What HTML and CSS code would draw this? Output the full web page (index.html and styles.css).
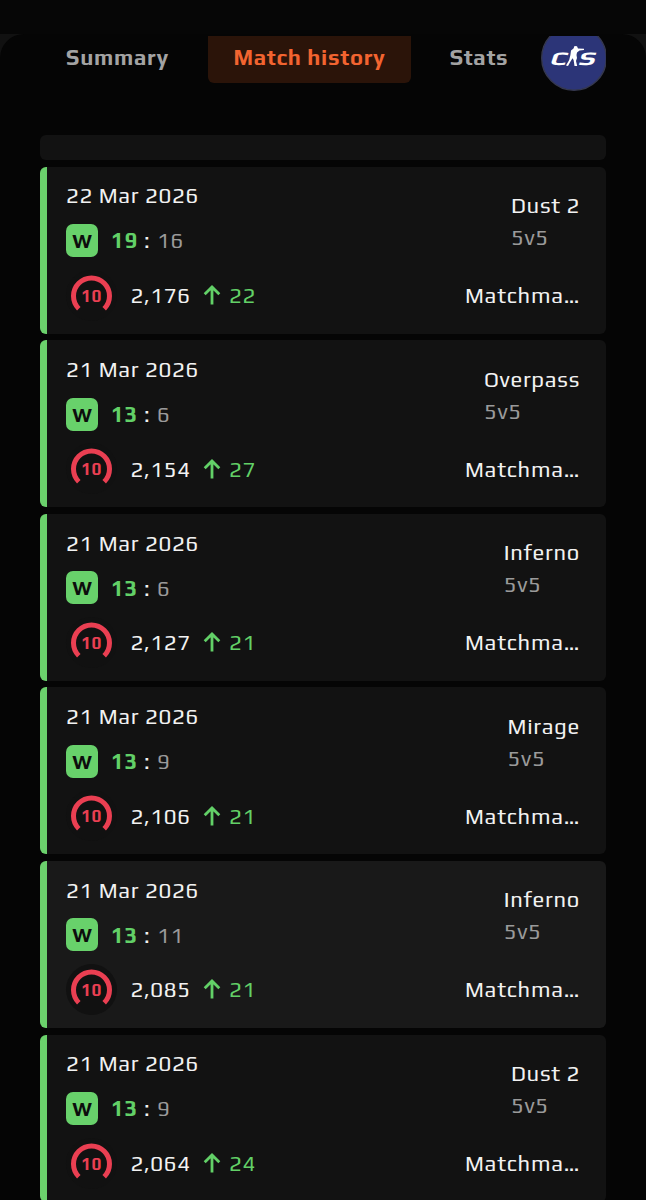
FILE: index.html
```
<!DOCTYPE html>
<html lang="en">
<head>
    <meta charset="UTF-8">
    <meta name="viewport" content="width=device-width, initial-scale=1.0">
    <title>Match history</title>
    <link rel="stylesheet" href="styles.css">
</head>
<body>
    <svg class="icons">
        <symbol id="ring" viewBox="0 0 51 51">
            <path d="M12.8 38.7 A18 18 0 1 1 38.2 38.7" fill="none" stroke="#ea3f52" stroke-width="5"/>
        </symbol>
        <symbol id="arrow" viewBox="0 0 18 20">
            <path d="M9 19.5 V3 M1.7 9.3 L9 2 L16.3 9.3" fill="none" stroke="#62d067" stroke-width="2.8"/>
        </symbol>
    </svg>

    <div class="topbar"></div>
    <div class="sheet">
        <div class="tabs">
            <div class="tab summary"><span>Summary</span></div>
            <div class="tab active"><span>Match history</span></div>
            <div class="tab stats"><span>Stats</span></div>
            <div class="game">
                <svg viewBox="0 0 66 66">
                    <circle cx="33" cy="33" r="32.3" fill="#2c3578" stroke="#35384f" stroke-width="1.4"/>
                    <g class="logo-text">
                        <text transform="translate(8 39.6) skewX(-18) scale(1.45 1)">C</text>
                        <text transform="translate(36.5 39.6) skewX(-18) scale(1.45 1)">S</text>
                    </g>
                    <path d="M33.5 21 L36 21.2 L37 23.5 L43 23.8 L43 25 L38.5 25.6 L36 27.5 L35.5 30 L36 33 L35 36 L36.2 41 L33.5 41 L32.6 35 L31.5 33.2 L29.5 36.5 L27 41 L25 40.5 L28.2 35 L29.4 30 L30 25.5 L32.5 23.4 Z" fill="#fff"/>
                </svg>
            </div>
        </div>

        <div class="matches">
            <div class="header-row"></div>

            <div class="match">
                <div class="left">
                    <div class="date"><span>22 Mar 2026</span></div>
                    <div class="score"><span class="result">W</span><b>19</b><i>:</i><span class="lost">16</span></div>
                    <div class="rating">
                        <div class="level"><svg><use href="#ring"/></svg><span>10</span></div>
                        <span class="elo">2,176</span><svg class="up"><use href="#arrow"/></svg><span class="gain">22</span>
                    </div>
                </div>
                <div class="right">
                    <div class="map"><span>Dust 2</span><small>5v5</small></div>
                    <div class="mode">Matchma…</div>
                </div>
            </div>

            <div class="match">
                <div class="left">
                    <div class="date"><span>21 Mar 2026</span></div>
                    <div class="score"><span class="result">W</span><b>13</b><i>:</i><span class="lost">6</span></div>
                    <div class="rating">
                        <div class="level"><svg><use href="#ring"/></svg><span>10</span></div>
                        <span class="elo">2,154</span><svg class="up"><use href="#arrow"/></svg><span class="gain">27</span>
                    </div>
                </div>
                <div class="right">
                    <div class="map"><span>Overpass</span><small>5v5</small></div>
                    <div class="mode">Matchma…</div>
                </div>
            </div>

            <div class="match">
                <div class="left">
                    <div class="date"><span>21 Mar 2026</span></div>
                    <div class="score"><span class="result">W</span><b>13</b><i>:</i><span class="lost">6</span></div>
                    <div class="rating">
                        <div class="level"><svg><use href="#ring"/></svg><span>10</span></div>
                        <span class="elo">2,127</span><svg class="up"><use href="#arrow"/></svg><span class="gain">21</span>
                    </div>
                </div>
                <div class="right">
                    <div class="map"><span>Inferno</span><small>5v5</small></div>
                    <div class="mode">Matchma…</div>
                </div>
            </div>

            <div class="match">
                <div class="left">
                    <div class="date"><span>21 Mar 2026</span></div>
                    <div class="score"><span class="result">W</span><b>13</b><i>:</i><span class="lost">9</span></div>
                    <div class="rating">
                        <div class="level"><svg><use href="#ring"/></svg><span>10</span></div>
                        <span class="elo">2,106</span><svg class="up"><use href="#arrow"/></svg><span class="gain">21</span>
                    </div>
                </div>
                <div class="right">
                    <div class="map"><span>Mirage</span><small>5v5</small></div>
                    <div class="mode">Matchma…</div>
                </div>
            </div>

            <div class="match selected">
                <div class="left">
                    <div class="date"><span>21 Mar 2026</span></div>
                    <div class="score"><span class="result">W</span><b>13</b><i>:</i><span class="lost">11</span></div>
                    <div class="rating">
                        <div class="level"><svg><use href="#ring"/></svg><span>10</span></div>
                        <span class="elo">2,085</span><svg class="up"><use href="#arrow"/></svg><span class="gain">21</span>
                    </div>
                </div>
                <div class="right">
                    <div class="map"><span>Inferno</span><small>5v5</small></div>
                    <div class="mode">Matchma…</div>
                </div>
            </div>

            <div class="match">
                <div class="left">
                    <div class="date"><span>21 Mar 2026</span></div>
                    <div class="score"><span class="result">W</span><b>13</b><i>:</i><span class="lost">9</span></div>
                    <div class="rating">
                        <div class="level"><svg><use href="#ring"/></svg><span>10</span></div>
                        <span class="elo">2,064</span><svg class="up"><use href="#arrow"/></svg><span class="gain">24</span>
                    </div>
                </div>
                <div class="right">
                    <div class="map"><span>Dust 2</span><small>5v5</small></div>
                    <div class="mode">Matchma…</div>
                </div>
            </div>
        </div>
    </div>
</body>
</html>
```

FILE: styles.css
```
*{
    box-sizing: border-box;
}
body{
    margin: 0;
    height: 1200px;
    overflow: hidden;
    background-color: #111111;
    color: #f2f2f2;
    font-family: Play, "Noto Sans", sans-serif;
    font-size: 22px;
    line-height: 32px;
    letter-spacing: 0.7px;
}
.icons{
    display: none;
}
.topbar{
    height: 34px;
    background-color: #060606;
}
.sheet{
    height: 1166px;
    padding: 2px 40px 0;
    border-radius: 24px 24px 0 0;
    background-color: #050505;
    overflow: hidden;
}

.tabs{
    display: flex;
    height: 98.5px;
    overflow: hidden;
}
.tab{
    height: 47px;
    line-height: 43px;
    font-weight: bold;
    color: #a3a3a3;
    text-align: center;
    white-space: nowrap;
}
.summary{
    width: 155px;
    margin-right: 13px;
}
.active{
    width: 203px;
    color: #f26430;
    background-color: #2b1409;
    border-radius: 0 0 6px 6px;
}
.stats{
    width: 130px;
    padding-left: 6px;
}
.game{
    width: 65px;
    height: 66px;
    margin-top: -11.5px;
    overflow: hidden;
}
.game svg{
    display: block;
    width: 66px;
    height: 66px;
}
.logo-text{
    font-size: 19px;
    font-weight: bold;
    letter-spacing: 0;
    fill: white;
}

.matches{
    display: flex;
    flex-direction: column;
    gap: 6.6px;
}
.header-row{
    flex: none;
    height: 25.5px;
    border-radius: 6px;
    background-color: #121212;
}
.match{
    flex: none;
    display: flex;
    justify-content: space-between;
    height: 167px;
    padding: 12.8px 26px 0 19px;
    border-left: 7px solid #6bd16c;
    border-radius: 6px;
    background-color: #121212;
}
.selected{
    background-color: #191919;
}
.date{
    height: 32px;
}
.score{
    display: flex;
    align-items: center;
    height: 33px;
    margin-top: 12.6px;
}
.result{
    width: 32px;
    height: 33px;
    margin-right: 13px;
    border-radius: 7px;
    background-color: #68d16b;
    color: #0d0d0d;
    font-size: 20px;
    font-weight: bold;
    line-height: 33px;
    letter-spacing: 0;
    text-align: center;
}
.score b{
    width: 33px;
    color: #62d067;
}
.score i{
    width: 13px;
    font-style: normal;
}
.lost{
    color: #9a9a9a;
}
.rating{
    display: flex;
    align-items: center;
    height: 51px;
    margin-top: 12.6px;
}
.level{
    display: grid;
    width: 51px;
    height: 51px;
    border-radius: 50%;
    background-color: #111111;
}
.level svg, .level span{
    grid-area: 1 / 1;
}
.level svg{
    width: 51px;
    height: 51px;
}
.level span{
    color: #ea3f52;
    font-size: 17px;
    font-weight: bold;
    line-height: 53px;
    letter-spacing: 0.5px;
    text-align: center;
}
.elo{
    width: 73px;
    padding-left: 13.5px;
}
.up{
    width: 18px;
    height: 20px;
    margin: 0 8px 0 13px;
}
.gain{
    color: #62d067;
}

.right{
    display: flex;
    flex-direction: column;
    align-items: flex-end;
    padding-top: 9.7px;
}
.map{
    display: flex;
    flex-direction: column;
}
.map span{
    height: 32px;
}
.map small{
    font-size: 22px;
    color: #9a9a9a;
}
.mode{
    margin-top: 26px;
    white-space: nowrap;
}
```
